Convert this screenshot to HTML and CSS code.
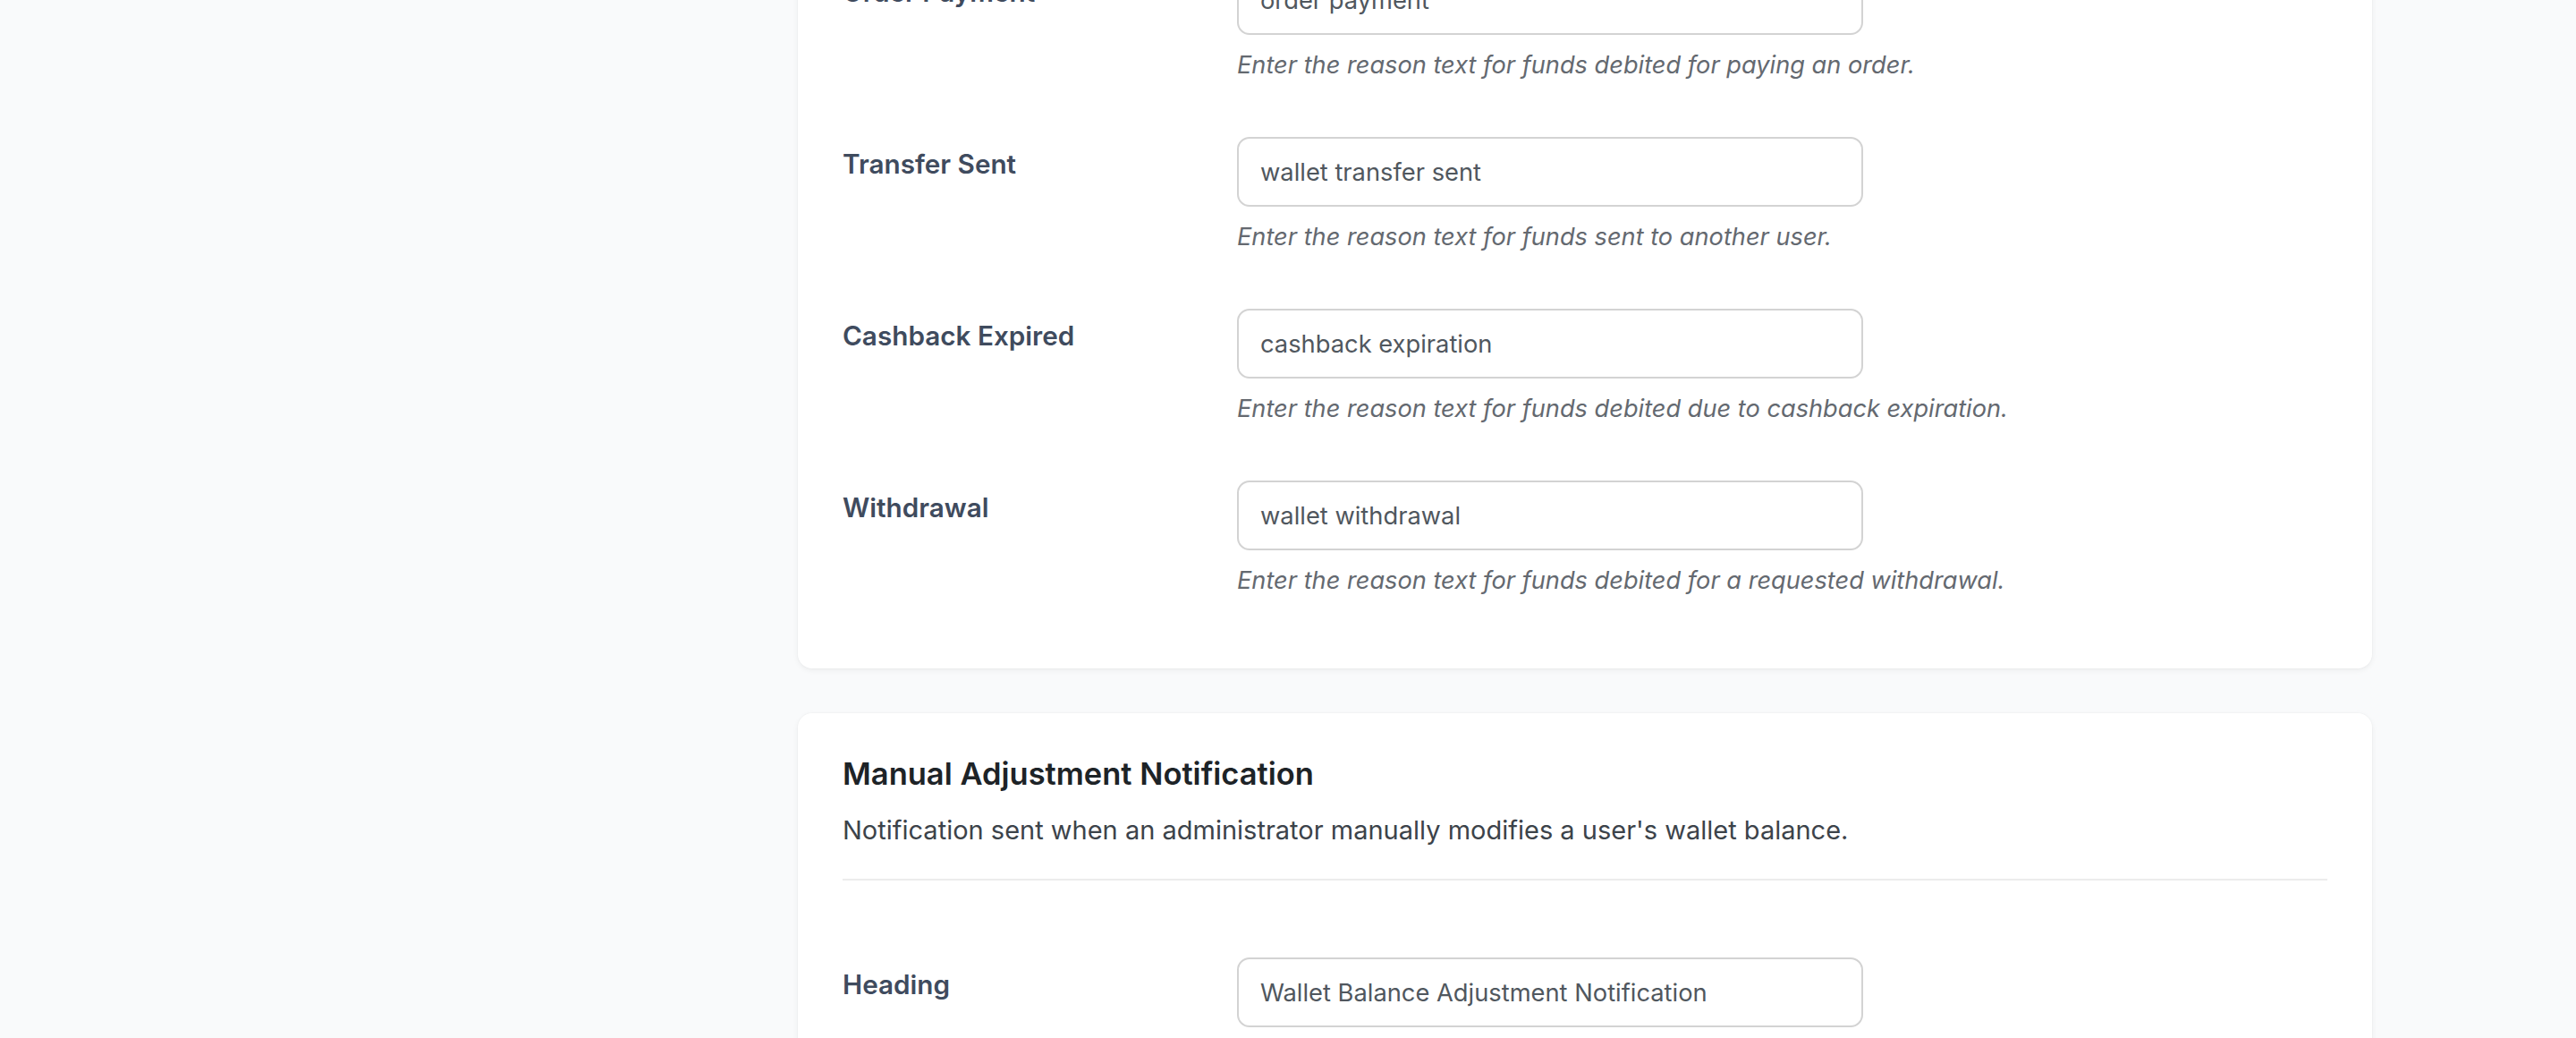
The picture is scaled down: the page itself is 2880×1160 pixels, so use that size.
FILE: index.html
```html
<!DOCTYPE html>
<html lang="en">
<head>
  <meta charset="UTF-8">
  <meta name="viewport" content="width=device-width, initial-scale=1.0">
  <title>Wallet Settings</title>
  <link rel="stylesheet" href="styles.css">
</head>
<body>
  <main class="settings">

    <!-- Transaction reasons -->
    <section class="card">
      <div class="field-row">
        <label class="field-label" for="order_payment">Order Payment</label>
        <div class="field-control">
          <input type="text" id="order_payment" value="order payment">
          <p class="description">Enter the reason text for funds debited for paying an order.</p>
        </div>
      </div>

      <div class="field-row">
        <label class="field-label" for="transfer_sent">Transfer Sent</label>
        <div class="field-control">
          <input type="text" id="transfer_sent" value="wallet transfer sent">
          <p class="description">Enter the reason text for funds sent to another user.</p>
        </div>
      </div>

      <div class="field-row">
        <label class="field-label" for="cashback_expired">Cashback Expired</label>
        <div class="field-control">
          <input type="text" id="cashback_expired" value="cashback expiration">
          <p class="description">Enter the reason text for funds debited due to cashback expiration.</p>
        </div>
      </div>

      <div class="field-row">
        <label class="field-label" for="withdrawal">Withdrawal</label>
        <div class="field-control">
          <input type="text" id="withdrawal" value="wallet withdrawal">
          <p class="description">Enter the reason text for funds debited for a requested withdrawal.</p>
        </div>
      </div>
    </section>

    <!-- Manual adjustment email -->
    <section class="card">
      <div class="card-header">
        <h2>Manual Adjustment Notification</h2>
        <p>Notification sent when an administrator manually modifies a user's wallet balance.</p>
      </div>
      <hr class="divider">

      <div class="field-row">
        <label class="field-label" for="adjust_heading">Heading</label>
        <div class="field-control">
          <input type="text" id="adjust_heading" value="Wallet Balance Adjustment Notification">
        </div>
      </div>
    </section>

  </main>
</body>
</html>
```

FILE: styles.css
```css
html, body {
  margin: 0;
  padding: 0;
}

body {
  font-family: 'Inter', 'Liberation Sans', sans-serif;
  background-color: #f9fafb;
  color: #3c434a;
  overflow: hidden;
}

.settings {
  width: 1760px;
  margin: -117px 0 0 892px;
  display: flex;
  flex-direction: column;
  gap: 50px;
}

.card {
  background-color: #fff;
  border-radius: 16px;
  padding: 48px 50px;
  box-shadow: 0 2px 6px rgba(0, 0, 0, 0.06), 0 0 0 1px rgba(0, 0, 0, 0.015);
}

.card-header h2 {
  margin: 0;
  font-size: 34.5px;
  line-height: 40px;
  font-weight: 600;
  color: #1d2327;
}

.card-header p {
  margin: 22px 0 0;
  font-size: 29px;
  line-height: 42px;
  color: #3c434a;
}

.divider {
  border: 0;
  height: 2px;
  background-color: #ececec;
  margin: 33px 0 56px;
}

.field-row {
  display: flex;
  padding: 30px 0;
}

.field-label {
  flex: 0 0 441px;
  padding-top: 12px;
  font-size: 29.7px;
  line-height: 36px;
  font-weight: 600;
  color: #3f4b5e;
}

.field-control {
  flex: 1;
}

.field-control input {
  display: block;
  box-sizing: border-box;
  width: 700px;
  height: 78px;
  margin: 0;
  padding: 0 24px;
  font-family: inherit;
  font-size: 27.3px;
  color: #50575e;
  background-color: #fff;
  border: 2px solid #d3d3d3;
  border-radius: 14px;
  outline: none;
}

.description {
  margin: 14px 0 0;
  font-size: 27.2px;
  line-height: 40px;
  font-style: italic;
  color: #646970;
}
```
